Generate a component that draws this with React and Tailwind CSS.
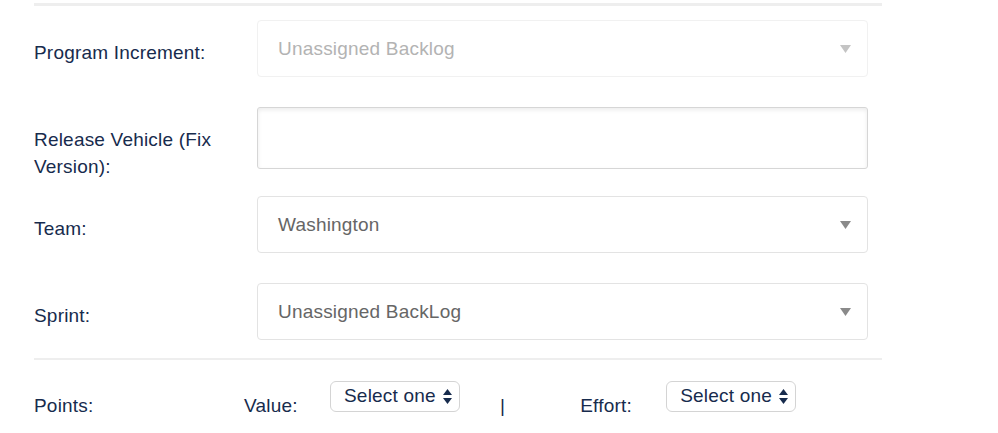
const Caret = ({ color }) => (
  <svg width="11" height="8" viewBox="0 0 11 8" className="shrink-0">
    <path d="M0 0 H11 L5.5 8 Z" fill={color} />
  </svg>
);

const UpDown = () => (
  <svg width="9" height="15" viewBox="0 0 9 15" className="shrink-0">
    <path d="M4.5 0 L9 6 H0 Z" fill="#172b4d" />
    <path d="M0 9 H9 L4.5 15 Z" fill="#172b4d" />
  </svg>
);

const FormRow = ({ label, children, height, className = "" }) => (
  <div className={`flex items-start ${className}`} style={{ height }}>
    <label className="w-[223px] shrink-0 pt-[19px] pr-4 leading-[27px] text-[#172b4d]">
      {label}
    </label>
    {children}
  </div>
);

const SelectBox = ({ value, disabled }) => (
  <div
    className={`flex h-full w-[611px] items-center justify-between rounded-[4px] border bg-white pl-5 pr-4 ${
      disabled ? "border-[#f1f1f1] text-[#b3b3b3]" : "border-[#e3e3e3] text-[#666666]"
    }`}
  >
    <span className="pt-px">{value}</span>
    <Caret color={disabled ? "#c4c4c4" : "#8a8a8a"} />
  </div>
);

const SmallSelect = () => (
  <div className="flex h-[31px] w-[130px] items-center gap-[7px] rounded-[6px] border border-[#d4d4d4] bg-white pl-[13px] text-[#172b4d]">
    <span>Select one</span>
    <UpDown />
  </div>
);

export default function App() {
  return (
    <div className="h-[433px] w-[998px] overflow-hidden bg-white font-['Liberation_Sans',Arial,sans-serif] text-[19px] tracking-[0.2px]">
      <div className="ml-[34px] w-[848px] pt-[3px]">
        <div className="h-[3px] bg-[#eeeeee]" />

        <FormRow label="Program Increment:" height={57} className="mt-[14px]">
          <SelectBox value="Unassigned Backlog" disabled />
        </FormRow>

        <FormRow label="Release Vehicle (Fix Version):" height={62} className="mt-[30px]">
          <div className="h-full w-[611px] rounded-[3px] border border-[#d6d6d6] bg-white shadow-[inset_0_2px_4px_rgba(0,0,0,0.08)]" />
        </FormRow>

        <FormRow label="Team:" height={57} className="mt-[27px]">
          <SelectBox value="Washington" />
        </FormRow>

        <FormRow label="Sprint:" height={57} className="mt-[30px]">
          <SelectBox value="Unassigned BackLog" />
        </FormRow>

        <div className="mt-[18px] h-[2px] bg-[#eeeeee]" />

        <div className="mt-[21px] flex items-start text-[#172b4d]">
          <span className="w-[210px] pt-[11px]">Points:</span>
          <span className="w-[86px] pt-[11px]">Value:</span>
          <SmallSelect />
          <span className="ml-[40px] pt-[11px]">|</span>
          <span className="ml-[75px] w-[86px] pt-[11px]">Effort:</span>
          <SmallSelect />
        </div>
      </div>
    </div>
  );
}
